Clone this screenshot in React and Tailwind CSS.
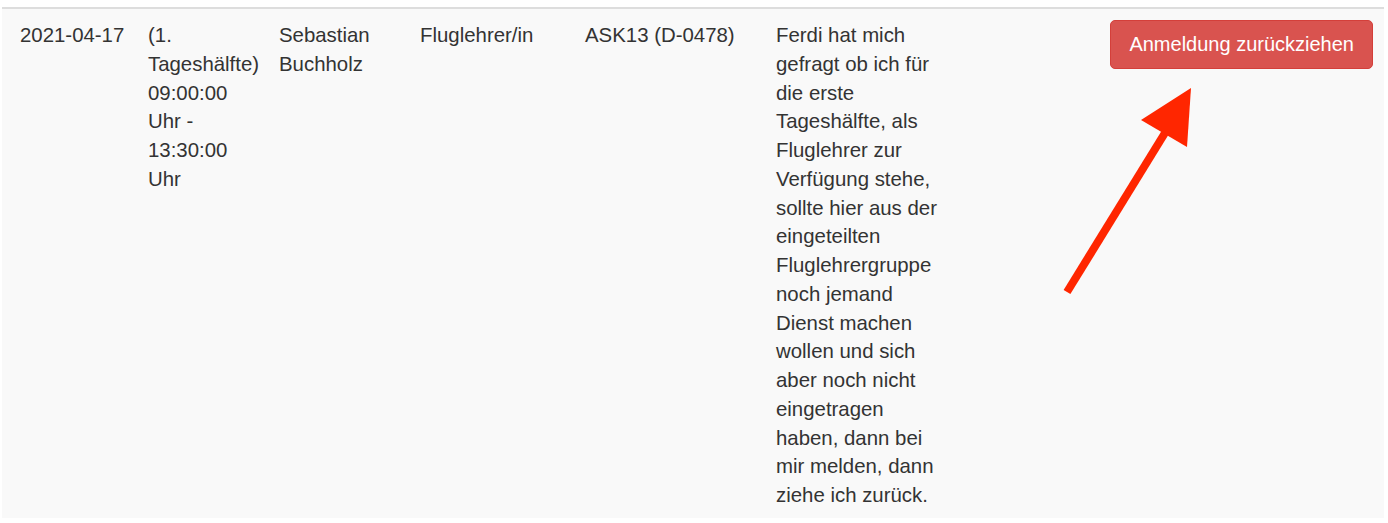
import React from "react";

const desc =
  "Ferdi hat mich gefragt ob ich für die erste Tageshälfte, als Fluglehrer zur Verfügung stehe, sollte hier aus der eingeteilten Fluglehrergruppe noch jemand Dienst machen wollen und sich aber noch nicht eingetragen haben, dann bei mir melden, dann ziehe ich zurück.";

const cell = "px-[11px] pt-[12px] pb-[8px] align-top";

export default function App() {
  return (
    <div
      className="relative h-[523px] w-[1388px] overflow-hidden bg-white text-[20.4px] leading-[28.75px] text-[#333]"
      style={{ fontFamily: '"Liberation Sans", Arial, sans-serif' }}
    >
      <div className="pt-[7px]">
        {/* table row */}
        <div className="ml-[2px] w-[1382px] border-t-2 border-[#dddddd] bg-[#f9f9f9]">
          <div className="flex pl-[7px]">
            <div className={`${cell} w-[128px] shrink-0`}>2021-04-17</div>
            <div className={`${cell} w-[131px] shrink-0`}>
              (1. Tageshälfte) 09:00:00 Uhr - 13:30:00 Uhr
            </div>
            <div className={`${cell} w-[141px] shrink-0`}>Sebastian Buchholz</div>
            <div className={`${cell} w-[165px] shrink-0`}>Fluglehrer/in</div>
            <div className={`${cell} w-[191px] shrink-0`}>ASK13 (D-0478)</div>
            <div className={`${cell} w-[192px] shrink-0`}>{desc}</div>
            <div className="flex flex-1 justify-end pr-[11px] pt-[11px]">
              <button className="h-[49px] rounded-[5px] border border-[#d43f3a] bg-[#d9534f] px-[18px] text-[20px] text-white">
                Anmeldung zurückziehen
              </button>
            </div>
          </div>
        </div>
      </div>

      {/* red annotation arrow */}
      <svg
        className="pointer-events-none absolute left-0 top-0"
        width="1388"
        height="523"
        viewBox="0 0 1388 523"
      >
        <line x1="1067" y1="292" x2="1168" y2="128" stroke="#ff2600" strokeWidth="8" />
        <polygon points="1191,88 1141,120 1187,147" fill="#ff2600" />
      </svg>
    </div>
  );
}
